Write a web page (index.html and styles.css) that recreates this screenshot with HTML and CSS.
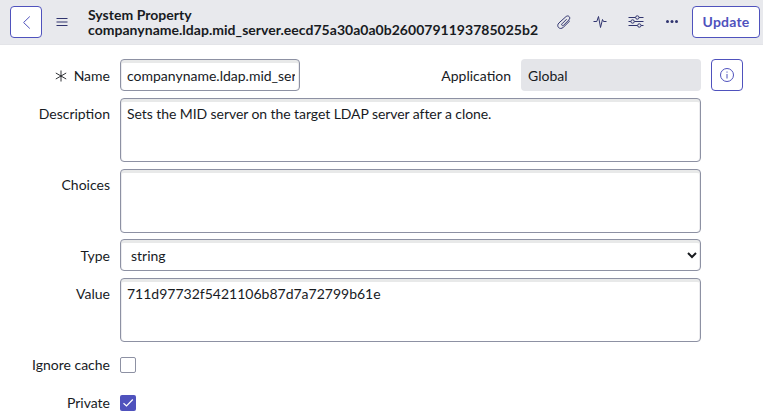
FILE: index.html
```html
<!DOCTYPE html>
<html lang="en">
<head>
<meta charset="utf-8">
<title>System Property</title>
<link rel="stylesheet" href="styles.css">
</head>
<body>
<header class="bar">
  <button class="btn btn-back" aria-label="Back"><svg width="30" height="30" viewBox="0 0 30 30"><path d="M18.800 9.500 12.600 15.500l6.200 6"/></svg></button>
  <button class="icon menu" aria-label="Menu"><svg width="14" height="10" viewBox="0 0 14 10"><path d="M1.500 1.500h11M1.500 5h11M1.500 8.500h11"/></svg></button>
  <h1 class="title">System Property<br>companyname.ldap.mid_server.eecd75a30a0a0b2600791193785025b2</h1>
  <nav class="tools">
    <button class="icon" aria-label="Attachments"><svg width="16" height="16" viewBox="0 0 16 16"><path d="M10.600 5.200 6 9.800c-1.100 1.200.5 2.500 1.600 1.400l5.400-5.400c2.200-2.300-.8-5.300-3.100-3.100L3 8.900c-3.400 3.300.9 7.700 4.300 4.400l6.500-6.400"/></svg></button>
    <button class="icon" aria-label="Activity"><svg width="16" height="16" viewBox="0 0 16 16"><path d="M1.500 7.500H4.800L6.500 2.500l2 11 2-8 1 2h3"/></svg></button>
    <button class="icon" aria-label="Personalize form"><svg width="16" height="16" viewBox="0 0 16 16"><path d="M.5 3.500h7M11.100 3.500h4.400M.5 7.500h2.300M6.400 7.500h9.100M.5 11.500h9M13.100 11.500h2.400"/><circle cx="9.300" cy="3.500" r="1.700"/><circle cx="4.600" cy="7.500" r="1.700"/><circle cx="11.300" cy="11.500" r="1.700"/></svg></button>
    <button class="icon" aria-label="More options"><svg class="dots" width="16" height="16" viewBox="0 0 16 16"><circle cx="3.500" cy="7.500" r="1.500"/><circle cx="8" cy="7.500" r="1.500"/><circle cx="12.500" cy="7.500" r="1.500"/></svg></button>
  </nav>
  <button class="btn btn-update">Update</button>
</header>
<form class="form">
  <div class="row">
    <label class="label label-inline" for="name"><svg class="required" width="12" height="12" viewBox="0 0 12 12"><path d="M6 .5v11M.8 3l10.400 6M11.200 3 .8 9"/></svg>Name</label>
    <input class="control name" id="name" type="text" value="companyname.ldap.mid_server.eecd75a30a0a0b2600791193785025b2">
    <span class="label label-inline label-app">Application</span>
    <div class="readonly">Global</div>
    <button class="btn btn-info" type="button" aria-label="Information"><svg width="16" height="16" viewBox="0 0 16 16"><circle cx="8" cy="8" r="6.500"/><path d="M8 7v4.500M8 4.500v1.200"/></svg></button>
  </div>
  <div class="row">
    <label class="label" for="description">Description</label>
    <textarea class="control area prose" id="description">Sets the MID server on the target LDAP server after a clone.</textarea>
  </div>
  <div class="row">
    <label class="label" for="choices">Choices</label>
    <textarea class="control area" id="choices"></textarea>
  </div>
  <div class="row row-type">
    <label class="label label-inline" for="type">Type</label>
    <select class="control select" id="type"><option>string</option></select>
  </div>
  <div class="row">
    <label class="label" for="value">Value</label>
    <textarea class="control area" id="value" spellcheck="false">711d97732f5421106b87d7a72799b61e</textarea>
  </div>
  <div class="row row-check">
    <label class="label">Ignore cache</label>
    <span class="check"></span>
  </div>
  <div class="row row-check">
    <label class="label">Private</label>
    <span class="check checked"><svg width="16" height="16" viewBox="0 0 16 16"><path d="m3.500 8.300 3 2.700 6.300-6.500"/></svg></span>
  </div>
</form>
</body>
</html>
```
FILE: styles.css
```css
* { box-sizing: border-box; }
body {
  margin: 0;
  background: #fff;
  color: #181b1f;
  font: 14px/20px Lato, "Liberation Sans", sans-serif;
}
button, input, textarea, select { font: inherit; color: inherit; margin: 0; }
svg { display: block; fill: none; stroke: currentColor; stroke-width: 1; }
.bar {
  display: flex;
  align-items: center;
  height: 45px;
  padding: 0 3px 1px 10px;
  background: #e8e9ed;
  border-bottom: 1px solid #e3e4e8;
}
.btn {
  flex: none;
  display: flex;
  align-items: center;
  justify-content: center;
  height: 32px;
  padding: 0;
  border: 1px solid #4f52bd;
  border-radius: 4px;
  background: #fff;
  color: #4f52bd;
}
.btn-back { width: 32px; }
.btn-update { width: 68px; font-weight: 700; letter-spacing: .2px; }
.btn-info { width: 32px; margin-left: 10px; }
.icon {
  display: flex;
  padding: 0;
  border: 0;
  background: none;
  color: #30346f;
}
.menu { margin-left: 13px; }
.menu svg { stroke-width: 1.2; }
.title {
  flex: 1;
  margin: 0 0 0 19px;
  font-size: 14px;
  line-height: 15px;
  font-weight: 700;
  letter-spacing: .025px;
  white-space: nowrap;
}
.tools { display: flex; gap: 20px; margin-right: 12px; }
.dots { fill: currentColor; stroke: none; }
.form { padding-top: 14px; }
.row { display: flex; margin-bottom: 7px; }
.label {
  display: flex;
  align-items: center;
  justify-content: flex-end;
  width: 110px;
  height: 32px;
  margin-right: 10px;
  padding-bottom: 1px;
}
.label-inline { padding: 1px 0 0; }
.required { margin-right: 7px; stroke-width: .9; }
.label-app { width: 211px; }
.control {
  display: block;
  border: 1px solid #8d91a3;
  border-radius: 4px;
  background: #fff;
  box-shadow: inset 0 3px 0 #e8e9e9, inset 1px 0 0 #ececef, inset -1px 0 0 #ececef;
  outline: 0;
}
.name { width: 180px; height: 32px; padding: 0 4px 0 6px; }
.readonly {
  width: 180px;
  height: 32px;
  padding: 7px 7px 0;
  border-radius: 4px;
  background: #e4e5e9;
}
.area { width: 581px; height: 64px; padding: 5px 6px; resize: none; overflow: hidden; }
.prose { letter-spacing: -.07px; }
.row-type { margin-top: -1px; }
.select { width: 581px; height: 32px; padding: 0 0 0 6px; }
.row-check { height: 32px; margin-bottom: 6px; }
.check {
  width: 16px;
  height: 16px;
  margin-top: 8px;
  border: 1px solid #8d91a3;
  border-radius: 2px;
  background: #fff;
}
.checked { border: 0; background: #4f52bd; color: #fff; }
.checked svg { stroke-width: 1.2; }
```
